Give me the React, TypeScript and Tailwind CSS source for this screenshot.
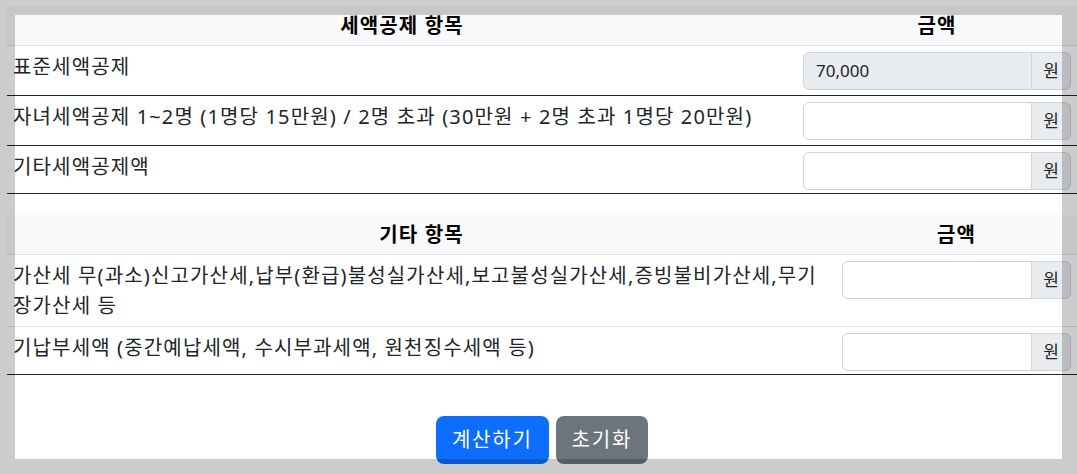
const font = { fontFamily: '"Noto Sans", "Noto Sans CJK KR", sans-serif' };

function WonInput({ value, disabled }: { value?: string; disabled?: boolean }) {
  return (
    <div className="flex h-[38px] w-full">
      <input
        type="text"
        readOnly
        value={value ?? ''}
        className={`min-w-0 flex-1 rounded-l-[6px] border border-[#ced4da] px-3 text-[17px] tracking-normal text-[#212529] outline-none ${
          disabled ? 'bg-[#e9ecef]' : 'bg-white'
        }`}
      />
      <span className="flex w-[39px] items-center justify-center rounded-r-[6px] border border-l-0 border-[#ced4da] bg-[#e9ecef] text-[17px] tracking-normal text-[#212529]">
        원
      </span>
    </div>
  );
}

type Row = { label: string; value?: string; disabled?: boolean; border: string };

function DeductionTable({ title, rows, leftWidth }: { title: string; rows: Row[]; leftWidth: string }) {
  return (
    <table className="w-[1070px] table-fixed border-separate border-spacing-0">
      <colgroup>
        <col className={leftWidth} />
        <col />
      </colgroup>
      <thead>
        <tr className="bg-[#f8f9fa]">
          <th className="border-b border-[#dee2e6] px-1.5 py-[4px] text-center leading-[31px] font-bold text-black">
            {title}
          </th>
          <th className="border-b border-[#dee2e6] px-1.5 py-[4px] text-center leading-[31px] font-bold text-black">
            금액
          </th>
        </tr>
      </thead>
      <tbody>
        {rows.map((row, idx) => {
          const last = idx === rows.length - 1;
          const pad = last ? 'pt-1.5 pb-[3px]' : 'pt-1.5 pb-[5px]';
          return (
            <tr key={idx}>
              <td className={`border-b ${row.border} px-1.5 ${pad} align-top leading-[30px] text-[#212529]`}>
                {row.label}
              </td>
              <td className={`border-b ${row.border} px-1.5 ${pad} align-top`}>
                <WonInput value={row.value} disabled={row.disabled} />
              </td>
            </tr>
          );
        })}
      </tbody>
    </table>
  );
}

export default function App() {
  const deductions: Row[] = [
    { label: '표준세액공제', value: '70,000', disabled: true, border: 'border-[#212529]' },
    {
      label: '자녀세액공제 1~2명 (1명당 15만원) / 2명 초과 (30만원 + 2명 초과 1명당 20만원)',
      border: 'border-[#212529]',
    },
    { label: '기타세액공제액', border: 'border-[#212529]' },
  ];

  const others: Row[] = [
    {
      label: '가산세 무(과소)신고가산세,납부(환급)불성실가산세,보고불성실가산세,증빙불비가산세,무기장가산세 등',
      border: 'border-[#dee2e6]',
    },
    { label: '기납부세액 (중간예납세액, 수시부과세액, 원천징수세액 등)', border: 'border-[#212529]' },
  ];

  return (
    <div className="relative h-[474px] w-[1077px] overflow-hidden bg-white text-[20px] tracking-[1.15px]" style={font}>
      <div className="pl-[7px] pt-[6px]">
        <DeductionTable title="세액공제 항목" rows={deductions} leftWidth="w-[790px]" />
        <div className="h-[21px]" />
        <DeductionTable title="기타 항목" rows={others} leftWidth="w-[829px]" />
        <div className="mt-[41px] flex justify-center gap-[7px]">
          <button className="h-[48px] rounded-[8px] bg-[#0d6efd] px-4 text-[20px] tracking-[1.75px] text-white">
            계산하기
          </button>
          <button className="h-[48px] rounded-[8px] bg-[#6c757d] px-4 text-[20px] tracking-[1.75px] text-white">
            초기화
          </button>
        </div>
      </div>
      <div className="pointer-events-none absolute inset-0 border-[15px] border-black/20" />
    </div>
  );
}
